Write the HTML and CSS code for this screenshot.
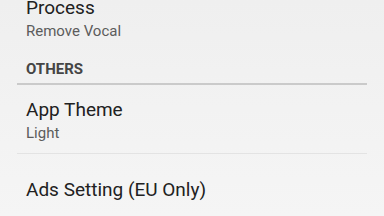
FILE: index.html
```html
<!DOCTYPE html>
<html lang="en">
<head>
    <meta charset="UTF-8">
    <meta name="viewport" content="width=device-width, initial-scale=1.0">
    <title>Settings</title>
    <link rel="stylesheet" href="styles.css">
</head>
<body>
<div class="settings-list">
    <div class="setting-item no-border">
        <p class="setting-title">Process</p>
        <p class="setting-summary">Remove Vocal</p>
    </div>
    <div class="section-header">OTHERS</div>
    <div class="setting-item">
        <p class="setting-title">App Theme</p>
        <p class="setting-summary">Light</p>
    </div>
    <div class="setting-item no-border">
        <p class="setting-title">Ads Setting (EU Only)</p>
    </div>
</div>
</body>
</html>
```

FILE: styles.css
```css
body{
    margin: 0;
    background: linear-gradient(#efefef, #f5f5f5);
    font-family: Roboto, "Noto Sans", sans-serif;
    height: 216px;
    overflow: hidden;
}
.settings-list{
    margin: -18px 17px 0 17px;
}
.setting-item{
    box-sizing: border-box;
    height: 69px;
    padding: 3px 0 0 9px;
    display: flex;
    flex-direction: column;
    justify-content: center;
    border-bottom: 1px solid #e3e3e3;
}
.no-border{
    border-bottom: none;
}
.setting-title{
    margin: 0 0 1px 0;
    font-size: 19px;
    line-height: 24px;
    color: #212121;
}
.setting-summary{
    margin: 0;
    font-size: 15px;
    line-height: 20px;
    color: #5c5c5c;
}
.section-header{
    padding: 8px 0 4px 9px;
    font-size: 15px;
    line-height: 20px;
    font-weight: bold;
    color: #454545;
    border-bottom: 2px solid #cacaca;
}
```
